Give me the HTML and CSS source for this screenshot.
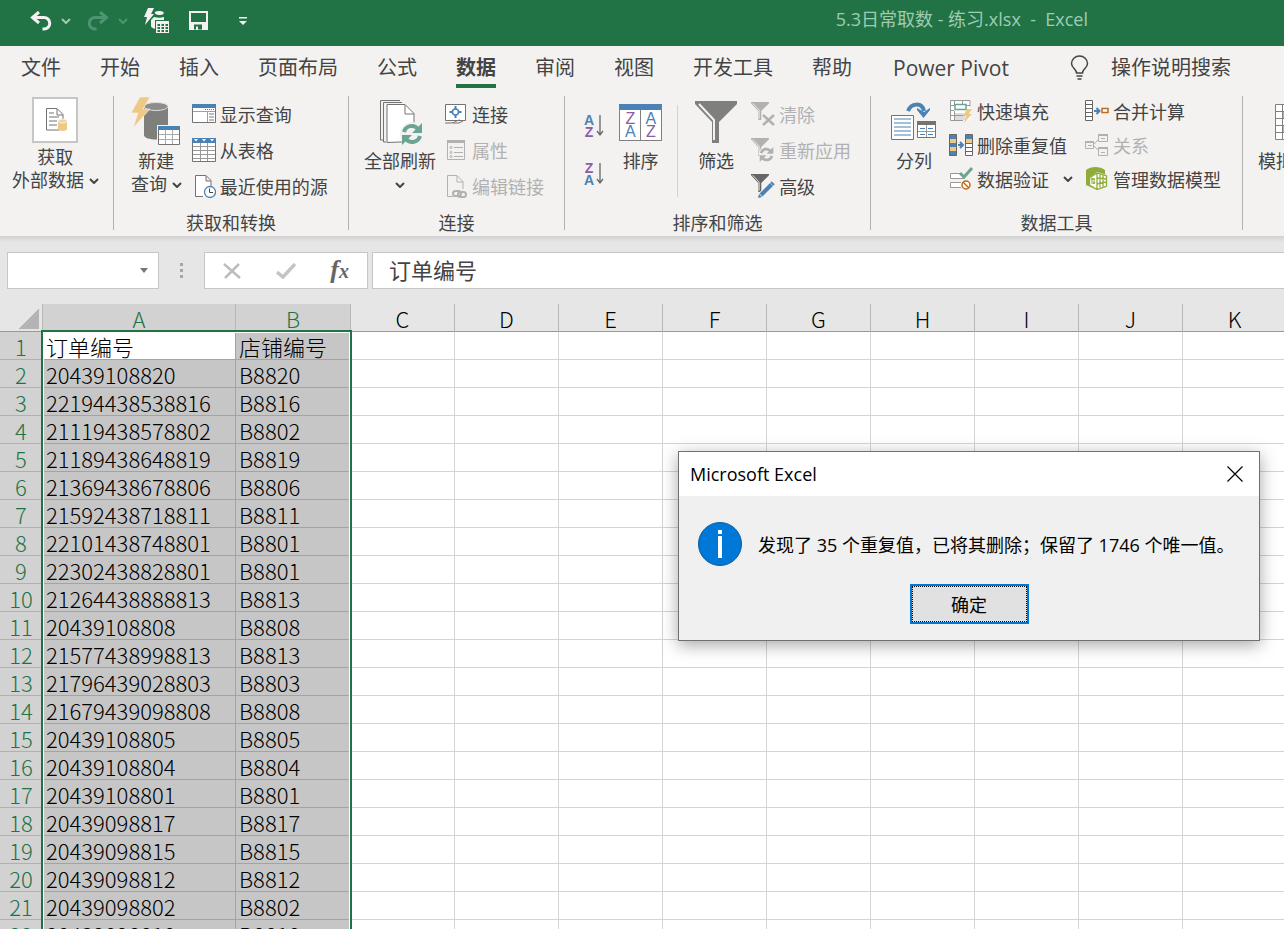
FILE: index.html
```html
<!DOCTYPE html>
<html lang="zh-CN">
<head>
  <meta charset="UTF-8">
  <meta name="viewport" content="width=device-width, initial-scale=1.0">
  <title>5.3日常取数 - 练习.xlsx - Excel</title>
  <link rel="stylesheet" href="styles.css">
</head>
<body>
  <!-- shared shapes -->
  <svg class="defs" aria-hidden="true">
    <symbol id="chevron" viewBox="0 0 10 6"><path d="M1 1l4 4 4-4" fill="none" stroke="currentColor" stroke-width="2"/></symbol>
    <symbol id="undo" viewBox="0 0 22 20"><path d="M9 1L2.500 6.500L9 12M3 6.500h11a5.500 5.500 0 0 1 0 11.500h-1.500" fill="none" stroke="currentColor" stroke-width="3"/></symbol>
    <symbol id="funnel" viewBox="0 0 42 42"><path d="M0 0h42v3L24 21v21h-7V21L0 3z" fill="currentColor"/><path d="M4 3l15 16v20" fill="none" stroke="#f3f2f1" stroke-width="2"/></symbol>
    <symbol id="refresh" viewBox="0 0 22 22"><path d="M3 9a8 8 0 0 1 14-3M19 13a8 8 0 0 1-14 3" fill="none" stroke="currentColor" stroke-width="4"/><path d="M21 0v10H11zM1 22V12h10z" fill="currentColor"/></symbol>
  </svg>

  <header class="titlebar">
    <div class="quick">
      <button class="quick-btn" aria-label="撤消"><svg width="22" height="20"><use href="#undo"/></svg></button>
      <button class="quick-arrow" aria-label="撤消列表"><svg width="10" height="6"><use href="#chevron"/></svg></button>
      <button class="quick-btn dim" aria-label="恢复" disabled><svg class="flip" width="22" height="20"><use href="#undo"/></svg></button>
      <button class="quick-arrow dim" aria-label="恢复列表" disabled><svg width="10" height="6"><use href="#chevron"/></svg></button>
      <button class="quick-btn query" aria-label="新建查询">
        <svg width="26" height="26" viewBox="0 0 26 26" fill="currentColor">
          <path d="M4 0h6L7 6h3L1 17l2-8H0z"/>
          <path d="M11 4c1-1 3-1 5-1 5 0 5 4 0 4-3 0-6-1-5-3zM7 12l3-3c4 1 7 1 10 0v3H11v9c-3-1-4-2-4-3z"/>
          <path d="M12 13h13v12H12z"/>
          <path d="M13.500 16h2.500v2h-2.500zM17.500 16h2.500v2h-2.500zM21.500 16h2.500v2h-2.500zM13.500 19h2.500v2h-2.500zM17.500 19h2.500v2h-2.500zM21.500 19h2.500v2h-2.500zM13.500 22h2.500v2h-2.500zM17.500 22h2.500v2h-2.500zM21.500 22h2.500v2h-2.500z" fill="#217346"/>
        </svg>
      </button>
      <button class="quick-btn save" aria-label="保存">
        <svg width="20" height="20" viewBox="0 0 20 20"><path d="M1 1h17v17H1z" fill="none" stroke="currentColor" stroke-width="2"/><path d="M1 11h17v7H1z" fill="currentColor"/><path d="M5 13.500h8v5H9v-3H7v3H5z" fill="#217346"/></svg>
      </button>
      <button class="quick-btn" aria-label="自定义快速访问工具栏">
        <svg width="8" height="8" viewBox="0 0 8 8"><path d="M0 0h8v1.500H0zM0 4h8L4 8z" fill="currentColor"/></svg>
      </button>
    </div>
    <h1 class="doc-title">5.3日常取数 - 练习.xlsx &nbsp;- &nbsp;Excel</h1>
  </header>

  <nav class="tabs">
    <a href="#file">文件</a>
    <a href="#home">开始</a>
    <a href="#insert">插入</a>
    <a href="#layout">页面布局</a>
    <a href="#formulas">公式</a>
    <a href="#data" class="active">数据</a>
    <a href="#review">审阅</a>
    <a href="#view">视图</a>
    <a href="#dev">开发工具</a>
    <a href="#help">帮助</a>
    <a href="#pivot" class="pivot">Power Pivot</a>
    <button class="tell-me">
      <svg width="20" height="26" viewBox="0 0 20 26" fill="none" stroke="currentColor" stroke-width="1.500"><path d="M6.500 18c0-4-5-5-5-9.500a8 7.500 0 0 1 16 0c0 4.500-5 5.500-5 9.500zM6.500 21h6M7.500 24h4"/></svg>
      操作说明搜索
    </button>
  </nav>

  <main class="ribbon">
    <section class="group group-external">
      <div class="group-body">
        <button class="big boxed">
          <span class="big-icon">
            <svg width="46" height="46" viewBox="0 0 46 46"><path d="M1 1h44v44H1z" fill="#fff" stroke="#c6c6c6" stroke-width="2"/><path d="M27 33H14.500V11.500H25l6 6V22M25 12v6h6" fill="none" stroke="#737373"/><path d="M17 16h5M17 20h10M17 24h8M17 28h8" stroke="#737373"/><path d="M26 24v8c0 2.500 9 2.500 9 0v-8z" fill="#eec884"/><ellipse cx="30.500" cy="24" rx="4.500" ry="2" fill="#f3d39c" stroke="#fff" stroke-width=".6"/></svg>
          </span>
          <span>获取</span>
          <span>外部数据 <svg class="chev" width="10" height="6"><use href="#chevron"/></svg></span>
        </button>
      </div>
    </section>
    <div class="divider"></div>

    <section class="group group-query">
      <div class="group-body">
        <button class="big">
          <span class="big-icon">
            <svg width="50" height="50" viewBox="0 0 50 50"><path d="M13 10v28c0 6 24 6 24 0V10z" fill="#7f7f7c"/><ellipse cx="25" cy="9.500" rx="12" ry="4" fill="#8d8d8a" stroke="#dededd"/><path d="M9 0h10l-7 12h7L2 31l5-15H0z" fill="#eec884" stroke="#f3f2f1" stroke-width=".6"/><path d="M26 28h23v21H26z" fill="#f3f2f1"/><path d="M27.500 29.500h21v18h-21z" fill="#fff" stroke="#737373"/><path d="M27 29h22v4H27z" fill="#4a82b3"/><path d="M28 37.500h20M28 42.500h20M34.500 33v14M41.500 33v14" stroke="#a9a9a9"/></svg>
          </span>
          <span>新建</span>
          <span>查询 <svg class="chev" width="10" height="6"><use href="#chevron"/></svg></span>
        </button>
        <div class="list">
          <button class="small">
            <svg width="24" height="24" viewBox="0 0 24 24"><path d="M.5 3.500h23v17H.5z" fill="#fff" stroke="#737373"/><path d="M0 2h24v4H0z" fill="#4a82b3"/><path d="M1 9.500h22M15.500 9v11" stroke="#a0a0a0"/><path d="M13 7.500h10" stroke="#777" stroke-dasharray="1 1"/><path d="M17 12h5M17 15h5M17 18h5" stroke="#777"/></svg>
            显示查询</button>
          <button class="small">
            <svg width="24" height="24" viewBox="0 0 24 24"><path d="M.5.5h23v23H.5z" fill="#fff" stroke="#737373"/><path d="M0 0h24v5H0z" fill="#4a82b3"/><path d="M2 1h4L4 3.500zM10 1h4l-2 2.500zM18 1h4l-2 2.500z" fill="#fff"/><path d="M1 8.500h22M1 12.500h22M1 16.500h22M1 20.500h22M8.500 5v18M15.500 5v18" stroke="#999"/></svg>
            从表格</button>
          <button class="small">
            <svg width="24" height="24" viewBox="0 0 24 24"><path d="M11 22.500H3.500V1.500H14l5 5V12M14 2v5h5" fill="#fff" stroke="#737373"/><circle cx="18" cy="18" r="5.500" fill="#fff" stroke="#4a82b3" stroke-width="1.300"/><path d="M17.500 14.500V18.500H21" fill="none" stroke="#444"/></svg>
            最近使用的源</button>
        </div>
      </div>
      <h2 class="group-name">获取和转换</h2>
    </section>
    <div class="divider"></div>

    <section class="group group-connect">
      <div class="group-body">
        <button class="big">
          <span class="big-icon">
            <svg width="46" height="46" viewBox="-2 -1 46 46"><path d="M4 40H1.500V.5H21M7 42H4.500V2.500H23" fill="none" stroke="#737373"/><path d="M8 42.500V4.500h18l9 9v28z" fill="#fff" stroke="#737373"/><path d="M26 5v9h9" fill="none" stroke="#737373"/><circle cx="33" cy="34" r="12" fill="#f3f2f1"/><svg x="22" y="23" width="22" height="22" color="#6aa594"><use href="#refresh"/></svg></svg>
          </span>
          <span>全部刷新</span>
          <span><svg class="chev" width="10" height="6"><use href="#chevron"/></svg></span>
        </button>
        <div class="list">
          <button class="small">
            <svg width="24" height="24" viewBox="0 0 24 24"><path d="M1.500 2.500h20v16h-20z" fill="#fff" stroke="#737373"/><path d="M1 21h6c4 0 5-3 9-3M9 21h6l4-2" fill="none" stroke="#737373"/><path d="M11.500 4v12M5.500 10h12" stroke="#4a82b3" stroke-width="2"/><circle cx="11.500" cy="10" r="3" fill="#fff" stroke="#4a82b3" stroke-width="1.500"/></svg>
            连接</button>
          <button class="small" disabled>
            <svg width="24" height="24" viewBox="0 0 24 24" stroke="#b1b1b1" fill="none"><path d="M3.500 2.500h17v19h-17z"/><path d="M3 3.500h18" stroke-width="3"/><path d="M10 9.500h9M10 14.500h9M10 18.500h9"/><circle cx="7" cy="9.500" r="1"/><circle cx="7" cy="14.500" r="1"/><circle cx="7" cy="18.500" r="1"/></svg>
            属性</button>
          <button class="small" disabled>
            <svg width="24" height="24" viewBox="0 0 24 24" stroke="#b1b1b1" fill="none"><path d="M9 22.500H3.500V1.500H13l6 6V15M13 2v6h6"/><rect x="9" y="17" width="8" height="5" rx="2.500" stroke-width="2"/><rect x="14" y="18" width="8" height="5" rx="2.500" stroke-width="2"/></svg>
            编辑链接</button>
        </div>
      </div>
      <h2 class="group-name">连接</h2>
    </section>
    <div class="divider"></div>

    <section class="group group-sort">
      <div class="group-body">
        <div class="sort-pair">
          <button class="sort-btn" aria-label="升序">
            <span class="az"><b class="blue">A</b><b class="purple">Z</b></span>
            <svg width="8" height="22" viewBox="0 0 8 22"><path d="M4 0v20M1 16l3 4 3-4" fill="none" stroke="#666" stroke-width="1.300"/></svg>
          </button>
          <button class="sort-btn" aria-label="降序">
            <span class="az"><b class="purple">Z</b><b class="blue">A</b></span>
            <svg width="8" height="22" viewBox="0 0 8 22"><path d="M4 0v20M1 16l3 4 3-4" fill="none" stroke="#666" stroke-width="1.300"/></svg>
          </button>
        </div>
        <button class="big">
          <span class="big-icon">
            <span class="sort-icon"><i class="purple">Z</i><i class="blue">A</i><i class="blue">A</i><i class="purple">Z</i></span>
          </span>
          <span>排序</span>
        </button>
        <div class="inner-divider"></div>
        <button class="big">
          <span class="big-icon"><svg width="42" height="42" color="#7f7f7c"><use href="#funnel"/></svg></span>
          <span>筛选</span>
        </button>
        <div class="list">
          <button class="small" disabled>
            <svg width="24" height="24" viewBox="0 0 24 24"><svg width="18" height="18" color="#b1b1b1"><use href="#funnel"/></svg><path d="M12 13l11 10M23 13L12 23" stroke="#b1b1b1" stroke-width="2.500"/></svg>
            清除</button>
          <button class="small" disabled>
            <svg width="24" height="24" viewBox="0 0 24 24"><svg width="18" height="18" color="#b1b1b1"><use href="#funnel"/></svg><circle cx="16" cy="16" r="8" fill="#f3f2f1"/><svg x="8" y="9" width="15" height="15" color="#b1b1b1"><use href="#refresh"/></svg></svg>
            重新应用</button>
          <button class="small">
            <svg width="24" height="24" viewBox="0 0 24 24"><svg width="18" height="18" color="#666"><use href="#funnel"/></svg><path d="M9 22L22 9" stroke="#f3f2f1" stroke-width="6"/><path d="M10 21L20.500 10.500" stroke="#4a82b3" stroke-width="4"/><path d="M20 8l3 3" stroke="#4a82b3" stroke-width="2"/><path d="M7 24l1-4 3 3z" fill="#4a82b3"/></svg>
            高级</button>
        </div>
      </div>
      <h2 class="group-name">排序和筛选</h2>
    </section>
    <div class="divider"></div>

    <section class="group group-tools">
      <div class="group-body">
        <button class="big">
          <span class="big-icon">
            <svg width="46" height="40" viewBox="0 0 46 40"><path d="M.5 13.500h22v24H.5z" fill="#fff" stroke="#737373"/><path d="M3 17h17M3 21h17M3 25h17M3 29h17M3 33h17" stroke="#4a82b3"/><path d="M17 9C20 1 31 0 33 9" fill="none" stroke="#4a82b3" stroke-width="4"/><path d="M26 8l6.500 8L39 8v-2l-6 4-7-4z" fill="#4a82b3"/><path d="M26.500 19.500h18v16h-18z" fill="#fff" stroke="#737373"/><path d="M26 19h19v4H26z" fill="#737373"/><path d="M27 29.500h17M35.500 23v12" stroke="#999"/><path d="M29 26.500h5M37 26.500h5M29 32.500h5M37 32.500h5" stroke="#4a82b3"/></svg>
          </span>
          <span>分列</span>
        </button>
        <div class="list tight">
          <button class="small">
            <svg width="24" height="24" viewBox="0 0 24 24"><path d="M1.500 2.500h20v19h-20z" fill="#fff"/><path d="M6 14h10v7H6z" fill="#ddd"/><path d="M1.500 1.500H21v6M1.500 1.500V21.500H14M1 6.500h20M1 11.500h4M1 16.500h14M5.500 1v5M13.500 1v5M5.500 12v9" fill="none" stroke="#999"/><path d="M6 5.500h11v5H6z" fill="#fff" stroke="#6aa594" stroke-width="1.500"/><path d="M18 10h5l-3 5h3l-8 9 2-7h-3z" fill="#eec884"/></svg>
            快速填充</button>
          <button class="small">
            <svg width="24" height="24" viewBox="0 0 24 24"><path d="M.5 1.500h7v21h-7z" fill="#4a82b3" stroke="#666"/><path d="M1 6h6v4H1zM1 14h6v4H1z" fill="#eec884"/><path d="M16.500 1.500h7v21h-7z" fill="#fff" stroke="#666"/><path d="M17 2h6v4h-6z" fill="#4a82b3"/><path d="M17 6h6v4h-6z" fill="#eec884"/><path d="M16 10.500h8M16 14.500h8M16 18.500h8" stroke="#666"/><path d="M9 12h5M11 9l3 3-3 3" fill="none" stroke="#4a82b3" stroke-width="2"/></svg>
            删除重复值</button>
          <button class="small">
            <svg width="24" height="24" viewBox="0 0 24 24"><path d="M13 6.500H1.500v5H15M12 15.500H1.500v5H12" fill="#fff" stroke="#999"/><path d="M11 6l4 4 8-9" fill="none" stroke="#6aa594" stroke-width="3"/><circle cx="17" cy="18" r="4" fill="#fff" stroke="#c26a1b" stroke-width="1.500"/><path d="M14 15l6 6" stroke="#c26a1b" stroke-width="1.500"/></svg>
            数据验证 <svg class="chev wide" width="10" height="6"><use href="#chevron"/></svg></button>
        </div>
        <div class="list tight">
          <button class="small">
            <svg width="24" height="24" viewBox="0 0 24 24"><path d="M.5 1.500h7v20h-7zM.5 5.500h7M.5 9.500h7M.5 13.500h7M.5 17.500h7" fill="#fff" stroke="#666"/><path d="M9 12h5M11.500 9l3 3-3 3" fill="none" stroke="#4a82b3" stroke-width="2"/><path d="M17 9.500h6v4h-6z" fill="#fff" stroke="#c26a1b" stroke-width="1.500"/></svg>
            合并计算</button>
          <button class="small" disabled>
            <svg width="24" height="24" viewBox="0 0 24 24" fill="none" stroke="#b1b1b1"><path d="M.5 8.500h8v7h-8zM13.500 1.500h9v7h-9zM13.500 14.500h9v8h-9zM9 11l5-5M9 13l5 5M3 12.500h4M16 5.500h4M16 19.500h4"/><path d="M0 9h9M13 2h10M13 15h10" stroke-width="2"/></svg>
            关系</button>
          <button class="small">
            <svg width="24" height="24" viewBox="0 0 24 24"><path d="M1 3c5-4 14-4 19 0v4h1v13l-9 3-11-5z" fill="#8fac3a"/><path d="M4 11l8-6 10 3v11l-10 4-8-5z" fill="#fff"/><path d="M4.500 11l7.500-5 9.500 3v10L12 22.500 4.500 18zM12 6v16M12 11l9.500 1M12 17l9.500-2M15 7.500v13M18 8.500v11" fill="none" stroke="#8fac3a" stroke-width="1.300"/><path d="M7 17v-5h3M6 13l1-2 1 2M9 11v6M8 15l1 2 1-2" fill="none" stroke="#8fac3a"/></svg>
            管理数据模型</button>
        </div>
      </div>
      <h2 class="group-name">数据工具</h2>
    </section>
    <div class="divider"></div>

    <section class="group group-forecast">
      <div class="group-body">
        <button class="big">
          <span class="big-icon">
            <svg width="38" height="38" viewBox="0 0 38 38"><path d="M.5 1.500h37v35H.5zM.5 8.500h37M.5 15.500h37M.5 22.500h37M.5 29.500h37M7.500 1v35M14.500 1v35" fill="#fff" stroke="#808080"/><path d="M8 9h6v6H8zM8 23h6v6H8z" fill="#e8a94f"/></svg>
          </span>
          <span>模拟分析</span>
        </button>
      </div>
    </section>
  </main>

  <div class="formula-bar">
    <div class="name-box">
      <input type="text" aria-label="名称框">
      <svg width="8" height="5" viewBox="0 0 8 5"><path d="M0 0h8L4 5z" fill="#777"/></svg>
    </div>
    <div class="dots"><i></i><i></i><i></i></div>
    <div class="fx-box">
      <button aria-label="取消"><svg width="18" height="16" viewBox="0 0 18 16"><path d="M1 1l16 14M16 1L2 15" stroke="#bdbdbd" stroke-width="2.500"/></svg></button>
      <button aria-label="输入"><svg width="20" height="16" viewBox="0 0 20 16"><path d="M1 9l6 5L19 1" fill="none" stroke="#c4c4c4" stroke-width="3.500"/></svg></button>
      <button class="fx" aria-label="插入函数"><i>f<small>x</small></i></button>
    </div>
    <input class="formula" type="text" aria-label="编辑栏" value="订单编号">
  </div>

  <div class="sheet">
    <table id="grid"></table>
    <div class="selection"></div>

    <div class="dialog" role="dialog" aria-labelledby="dialogTitle">
      <div class="dialog-head">
        <span id="dialogTitle">Microsoft Excel</span>
        <button aria-label="关闭"><svg width="16" height="16" viewBox="0 0 16 16"><path d="M.5.5l15 15M15.500.5l-15 15" stroke="#000" stroke-width="1.200"/></svg></button>
      </div>
      <div class="dialog-body">
        <svg width="44" height="44" viewBox="0 0 44 44"><circle cx="22" cy="22" r="21.500" fill="#0078d7" stroke="#0b5c9c"/><path d="M20 8h4v4h-4zM20 14h4v22h-4z" fill="#fff"/></svg>
        <p>发现了 35 个重复值，已将其删除；保留了 1746 个唯一值。</p>
      </div>
      <button class="ok">确定</button>
    </div>
  </div>

  <script>
    const cols = ['A', 'B', 'C', 'D', 'E', 'F', 'G', 'H', 'I', 'J', 'K'];
    const rows = [
      ['订单编号', '店铺编号'],
      ['20439108820', 'B8820'],
      ['22194438538816', 'B8816'],
      ['21119438578802', 'B8802'],
      ['21189438648819', 'B8819'],
      ['21369438678806', 'B8806'],
      ['21592438718811', 'B8811'],
      ['22101438748801', 'B8801'],
      ['22302438828801', 'B8801'],
      ['21264438888813', 'B8813'],
      ['20439108808', 'B8808'],
      ['21577438998813', 'B8813'],
      ['21796439028803', 'B8803'],
      ['21679439098808', 'B8808'],
      ['20439108805', 'B8805'],
      ['20439108804', 'B8804'],
      ['20439108801', 'B8801'],
      ['20439098817', 'B8817'],
      ['20439098815', 'B8815'],
      ['20439098812', 'B8812'],
      ['20439098802', 'B8802'],
      ['20439098810', 'B8810']
    ];
    const table = document.getElementById('grid');

    function addCell(row, tag, text, cls) {
      const cell = document.createElement(tag);
      cell.textContent = text;
      if (cls) cell.className = cls;
      row.appendChild(cell);
    }

    const head = table.createTHead().insertRow();
    addCell(head, 'th', '', 'corner');
    cols.forEach((c, i) => addCell(head, 'th', c, i < 2 ? 'col-' + c.toLowerCase() + ' picked' : ''));

    const body = table.createTBody();
    rows.forEach((data, r) => {
      const row = body.insertRow();
      addCell(row, 'th', r + 1);
      cols.forEach((c, i) => {
        const active = r === 0 && i === 0;
        addCell(row, 'td', data[i] || '', active ? 'current' : i < 2 ? 'picked' : '');
      });
    });
  </script>
</body>
</html>
```
FILE: styles.css
```css
* {
  box-sizing: border-box;
}
body {
  margin: 0;
  height: 100vh;
  display: flex;
  flex-direction: column;
  overflow: hidden;
  font-family: "Open Sans", "Noto Sans CJK SC", sans-serif;
  font-size: 18px;
  color: #444;
  background: #e6e6e6;
}
button, input {
  font: inherit;
  color: inherit;
  border: none;
  background: none;
  padding: 0;
  margin: 0;
}
h1, h2, p {
  margin: 0;
  font-size: 18px;
  font-weight: 400;
}
svg {
  display: block;
  flex: none;
}
.defs {
  display: none;
}

/* title bar */
.titlebar {
  flex: none;
  display: flex;
  align-items: center;
  height: 46px;
  padding: 0 196px 4px 30px;
  background: #217346;
}
.quick {
  display: flex;
  align-items: center;
  color: #f3f2f1;
}
.quick-arrow {
  margin: 0 16px 0 9px;
  color: #a6c7b5;
}
.dim {
  color: #4f9470;
}
.flip {
  transform: scaleX(-1);
}
.query {
  margin-right: 19px;
}
.save {
  margin-right: 30px;
}
.doc-title {
  margin-left: auto;
  line-height: 24px;
  padding-bottom: 4px;
  color: #9fcbb3;
  white-space: nowrap;
}

/* tabs */
.tabs {
  flex: none;
  display: flex;
  gap: 39px;
  height: 48px;
  padding: 7px 20px 0 21px;
  font-size: 20px;
  line-height: 30px;
  background: #f3f2f1;
  white-space: nowrap;
}
.tabs a {
  height: 35px;
  color: #444;
  text-decoration: none;
}
.tabs .active {
  font-weight: 700;
  border-bottom: 4px solid #217346;
}
.tabs .pivot {
  margin-left: 2px;
  font-size: 21px;
}
.tell-me {
  display: flex;
  align-items: center;
  gap: 21px;
  height: 30px;
  margin-left: 22px;
}

/* ribbon */
.ribbon {
  flex: none;
  display: flex;
  height: 142px;
  background: #f3f2f1;
  overflow: hidden;
}
.group {
  flex: none;
  display: flex;
  flex-direction: column;
  justify-content: space-between;
}
.group-external {
  width: 113px;
}
.group-query {
  width: 234px;
}
.group-connect {
  width: 215px;
}
.group-sort {
  width: 305px;
}
.group-tools {
  width: 371px;
}
.divider {
  flex: none;
  width: 1px;
  margin: 2px 0 6px;
  background: #b1b1b1;
}
.group-body {
  display: flex;
  white-space: nowrap;
}
.group-external .group-body {
  padding-left: 12px;
}
.group-query .group-body {
  padding-left: 17px;
}
.group-connect .group-body {
  padding-left: 15px;
}
.group-sort .group-body {
  padding-left: 19px;
}
.group-tools .group-body {
  padding-left: 20px;
}
.group-forecast .group-body {
  padding-left: 15px;
}
.group-name {
  line-height: 26px;
  text-align: center;
}
.big {
  display: flex;
  flex-direction: column;
  align-items: center;
  align-self: flex-start;
  line-height: 23px;
}
.big-icon {
  display: flex;
  align-items: center;
  justify-content: center;
  height: 56px;
}
.boxed .big-icon {
  height: 52px;
}
.chev {
  display: inline-block;
  vertical-align: 3px;
}
.wide {
  margin-left: 10px;
}
.list {
  display: flex;
  flex-direction: column;
  padding: 2px 0 0 10px;
}
.group-connect .list {
  padding-left: 8px;
}
.group-sort .list {
  padding-left: 14px;
}
.small {
  display: flex;
  align-items: center;
  gap: 4px;
  height: 36px;
}
.small:disabled {
  color: #b1b1b1;
}
.tight {
  padding: 0 0 0 12px;
}
.tight .small {
  height: 34px;
}
.sort-pair {
  display: flex;
  flex-direction: column;
  gap: 24px;
  padding: 20px 15px 0 0;
}
.sort-btn {
  display: flex;
  align-items: center;
  gap: 2px;
}
.az {
  display: flex;
  flex-direction: column;
  font-family: "Liberation Sans", sans-serif;
  font-size: 14px;
  line-height: 12px;
}
.blue {
  color: #4a82b3;
}
.purple {
  color: #8e5ba8;
}
.sort-icon {
  display: grid;
  grid-template-columns: 1fr 1fr;
  grid-auto-flow: column;
  grid-template-rows: 13px 13px;
  width: 43px;
  height: 37px;
  padding-top: 2px;
  border: 1px solid #808080;
  border-top: 6px solid #4a82b3;
  background: linear-gradient(#808080, #808080) center / 1px 100% no-repeat #fff;
  font-family: "Liberation Sans", sans-serif;
  font-size: 16px;
  line-height: 13px;
  text-align: center;
}
.sort-icon i {
  font-style: normal;
}
.inner-divider {
  width: 1px;
  height: 92px;
  margin: 11px 17px 0 15px;
  background: #d2d2d2;
}

/* formula bar */
.formula-bar {
  flex: none;
  display: flex;
  height: 68px;
  padding: 16px 0 15px 7px;
  background: linear-gradient(#d0d0d0, #e6e6e6 6px);
}
.name-box {
  display: flex;
  align-items: center;
  width: 152px;
  padding-right: 10px;
  border: 1px solid #c6c6c6;
  background: #fff;
}
.name-box input {
  flex: 1;
  min-width: 0;
}
.dots {
  display: flex;
  flex-direction: column;
  justify-content: center;
  align-items: center;
  gap: 3px;
  width: 45px;
}
.dots i {
  width: 3px;
  height: 3px;
  background: #a6a6a6;
}
.fx-box {
  display: flex;
  align-items: center;
  justify-content: space-between;
  width: 164px;
  margin-right: 4px;
  padding: 0 18px;
  border: 1px solid #c6c6c6;
  background: #fff;
}
.fx {
  font-family: "Liberation Serif", serif;
  font-size: 26px;
  font-weight: 700;
  line-height: 30px;
  color: #666;
}
.fx small {
  font-size: 20px;
}
.formula {
  flex: 1;
  min-width: 0;
  padding: 0 0 4px 16px;
  font-family: "Noto Sans CJK SC", sans-serif;
  font-size: 22px;
  border: 1px solid #c6c6c6;
  border-right: none;
  background: #fff;
}

/* sheet */
.sheet {
  flex: 1;
  min-height: 0;
  position: relative;
  overflow: hidden;
  background: #fff;
}
table {
  width: 1287px;
  table-layout: fixed;
  border-collapse: separate;
  border-spacing: 0;
  font-family: "Noto Sans CJK SC", sans-serif;
  font-size: 22px;
  font-weight: 300;
  line-height: 25px;
  color: #000;
}
th, td {
  height: 28px;
  padding: 2px 0 0;
  font-weight: 300;
  white-space: nowrap;
  border-right: 1px solid #d4d4d4;
  border-bottom: 1px solid #d4d4d4;
}
td {
  padding-left: 3px;
}
thead th {
  width: 104px;
  background: #e6e6e6;
  border-right-color: #b8b8b8;
  border-bottom-color: #999;
}
.corner {
  width: 43px;
  background: linear-gradient(135deg, transparent 50%, #b4b4b4 50%) 19px 5px / 20px 20px no-repeat #e6e6e6;
}
.col-a {
  width: 193px;
}
.col-b {
  width: 115px;
}
thead .picked {
  color: #217346;
  background: #d2d2d2;
}
tbody th {
  color: #217346;
  background: #d2d2d2;
  border-bottom-color: #b0b0b0;
}
td.picked {
  background: #c6c6c6;
  border-color: #a3a3a3;
}
td.current {
  border-color: #a3a3a3;
}
.selection {
  position: absolute;
  top: 26px;
  bottom: -4px;
  left: 41px;
  width: 311px;
  border: 2px solid #217346;
  box-shadow: inset 0 0 0 1px #fff;
}

/* message box */
.dialog {
  position: absolute;
  top: 147px;
  left: 678px;
  width: 582px;
  padding-bottom: 16px;
  color: #000;
  background: #f0f0f0;
  border: 1px solid #707070;
  box-shadow: 0 4px 16px rgba(0, 0, 0, 0.35);
}
.dialog-head {
  display: flex;
  align-items: center;
  justify-content: space-between;
  height: 44px;
  padding: 0 16px 0 11px;
  background: #fff;
}
.dialog-body {
  display: flex;
  align-items: center;
  gap: 16px;
  padding: 26px 19px 18px;
  white-space: nowrap;
}
.ok {
  display: block;
  width: 119px;
  height: 40px;
  margin: 0 auto;
  background: #e1e1e1;
  border: 2px solid #0078d7;
  outline: 1px dotted #000;
  outline-offset: -3px;
}
```
